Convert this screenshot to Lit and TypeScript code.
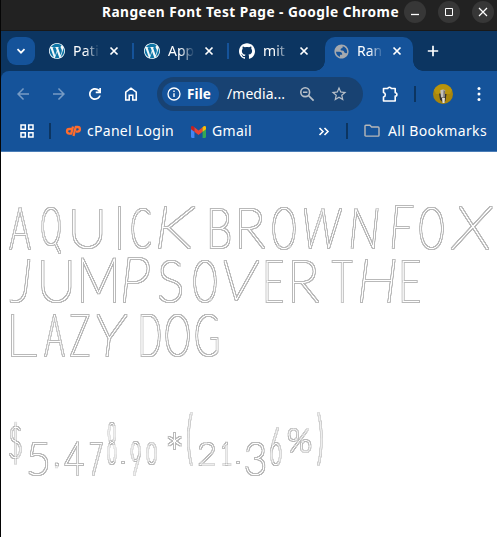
import { LitElement, html, css, svg, nothing } from "lit";
import { customElement, property } from "lit/decorators.js";
import { styleMap } from "lit/directives/style-map.js";

const ctx = document.createElement("canvas").getContext("2d")!;

/* Text whose tracking is adjusted so that it spans a given width. */
@customElement("fit-label")
class FitLabel extends LitElement {
  @property() text = "";
  @property({ type: Number }) span = 0;
  @property({ type: Number }) size = 14;
  @property({ type: Number }) weight = 400;
  static styles = css`
    :host { display: block; flex: none; }
    .label { display: block; white-space: pre; font-family: "Noto Sans", "Open Sans", sans-serif; line-height: 20px; }
  `;
  render() {
    ctx.font = `${this.weight} ${this.size}px "Noto Sans"`;
    const gap = (this.span - ctx.measureText(this.text).width) / this.text.length;
    return html`<span class="label" style=${styleMap({
      width: `${this.span}px`, fontSize: `${this.size}px`,
      fontWeight: `${this.weight}`, letterSpacing: `${gap.toFixed(3)}px`,
    })}>${this.text}</span>`;
  }
}

/* glyph, left, right, top, bottom (top and bottom relative to the line), optional italic */
type Glyph = [string, number, number, number, number, boolean?];
const LINES: { height: number; glyphs: Glyph[] }[] = [
  { height: 54, glyphs: [
    ["A", 9, 31, 7, 50], ["Q", 41, 62, 8, 55], ["U", 72, 103, 8, 49], ["I", 117, 122, 5, 50], ["C", 131, 152, 7, 49],
    ["K", 157, 197, 6, 49, true], [" ", 197, 207, 0, 0], ["B", 209, 231, 7, 49], ["R", 238, 266, 7, 49], ["O", 272, 296, 7, 50],
    ["W", 303, 343, 7, 49, true], ["N", 350, 379, 7, 49, true], [" ", 379, 389, 0, 0], ["F", 391, 414, 5, 49, true], ["O", 419, 444, 7, 50], ["X", 450, 493, 6, 50, true]] },
  { height: 54, glyphs: [
    ["J", 9, 31, 5, 49, true], ["U", 41, 72, 6, 49], ["M", 80, 116, 2, 49], ["P", 122, 151, 3, 49, true], ["S", 158, 183, 6, 49],
    [" ", 183, 192, 0, 0], ["O", 193, 217, 6, 49], ["V", 223, 260, 5, 47, true], ["E", 265, 284, 6, 49], ["R", 291, 320, 6, 49],
    [" ", 320, 330, 0, 0], ["T", 331, 353, 6, 49], ["H", 359, 396, 5, 49, true], ["E", 401, 421, 6, 49]] },
  { height: 108, glyphs: [
    ["L", 10, 38, 6, 49], ["A", 44, 65, 6, 49], ["Z", 70, 90, 6, 49], ["Y", 96, 128, 6, 49, true], [" ", 128, 139, 0, 0],
    ["D", 140, 161, 6, 49], ["O", 165, 190, 6, 49], ["G", 195, 219, 6, 49]] },
  { height: 60, glyphs: [
    ["$", 9, 22, 5, 49], ["5", 28, 49, 25, 60], [",", 54, 59, 46, 53], ["4", 64, 85, 25, 60], ["7", 89, 103, 25, 60],
    ["8", 107, 117, 6, 49], [".", 121, 125, 44, 48], ["9", 130, 141, 25, 60], ["0", 146, 157, 25, 49], ["*", 167, 182, 15, 34],
    ["(", 187, 193, -5, 52], ["2", 198, 216, 25, 50], ["1", 221, 232, 24, 50], [".", 236, 240, 44, 48], ["3", 245, 266, 25, 60],
    ["6", 270, 282, 10, 50], ["%", 287, 312, 11, 37], [")", 317, 323, -5, 52]] },
];
const INSET = 1.3;

/* Thin monoline letters; the filter swells each stroke and keeps only its rim. */
@customElement("outline-specimen")
class OutlineSpecimen extends LitElement {
  static styles = css`
    :host { display: block; padding-top: 48px; }
    .defs { display: block; width: 0; height: 0; }
    .sheet { filter: url(#rim); }
    .line { display: flex; align-items: flex-start; }
    .cell { display: block; flex: none; height: 10px; white-space: pre; }
    .glyph {
      display: block; width: 0; height: 0; transform-origin: 0 0;
      font: 100 50px/0 Lato, sans-serif; color: #000;
    }
    .slant { font-style: italic; }
  `;
  render() {
    return html`<svg class="defs"><filter id="rim" x="-5%" y="-10%" width="110%" height="120%" color-interpolation-filters="sRGB">
      <feComponentTransfer result="core"><feFuncA type="linear" slope="2.6" intercept="-.1"/></feComponentTransfer>
      <feMorphology in="core" operator="dilate" radius="1" result="wide"/>
      <feComposite in="wide" in2="core" operator="out"/>
      <feComponentTransfer>
        <feFuncR type="linear" slope="0" intercept=".4"/><feFuncG type="linear" slope="0" intercept=".4"/><feFuncB type="linear" slope="0" intercept=".4"/>
        <feFuncA type="linear" slope=".46"/>
      </feComponentTransfer></filter></svg>
    <div class="sheet">${LINES.map(({ height, glyphs }) => {
      let x = 0;
      return html`<div class="line" style=${styleMap({ height: `${height}px` })}>${glyphs.map(([ch, l, r, t, b, it]) => {
        const cell = { marginLeft: `${l - x}px`, width: `${r - l}px` };
        x = r;
        if (ch === " ") return html`<span class="cell" style=${styleMap(cell)}> </span>`;
        ctx.font = `${it ? "italic " : ""}100 50px Lato`;
        const m = ctx.measureText(ch);
        const w = m.actualBoundingBoxLeft + m.actualBoundingBoxRight;
        const h = m.actualBoundingBoxAscent + m.actualBoundingBoxDescent;
        const base = (m.fontBoundingBoxAscent - m.fontBoundingBoxDescent) / 2;
        const sx = (r - l - 2 * INSET) / w, sy = (b - t - 2 * INSET) / h;
        const tx = INSET - 1 + m.actualBoundingBoxLeft * sx;
        const ty = t + INSET + (m.actualBoundingBoxAscent - base) * sy;
        return html`<span class="cell" style=${styleMap(cell)}><span class="glyph ${it ? "slant" : ""}"
          style=${styleMap({ transform: `matrix(${sx},0,0,${sy},${tx},${ty})` })}>${ch}</span></span>`;
      })}</div>`;
    })}</div>`;
  }
}

const icon = (body: unknown, size = 18, box = "0 0 24 24") =>
  html`<svg class="icon" width=${size} height=${size} viewBox=${box}>${body}</svg>`;

const wordpress = icon(svg`<circle cx="12" cy="12" r="11.6" fill="#0d75a6"/><path fill="#f4f8fa" d="M21.469 6.825c.84 1.537 1.318 3.3 1.318 5.175 0 3.979-2.156 7.456-5.363 9.325l3.295-9.527c.615-1.54.82-2.771.82-3.864 0-.405-.026-.78-.07-1.11m-7.981.105c.647-.03 1.232-.105 1.232-.105.582-.075.514-.93-.067-.899 0 0-1.755.135-2.88.135-1.064 0-2.85-.15-2.85-.15-.585-.03-.661.855-.075.885 0 0 .54.061 1.125.09l1.68 4.605-2.37 7.08L5.354 6.9c.649-.03 1.234-.1 1.234-.1.585-.075.516-.93-.065-.896 0 0-1.746.138-2.874.138-.2 0-.438-.008-.69-.015C4.911 3.15 8.235 1.215 12 1.215c2.809 0 5.365 1.072 7.286 2.833-.046-.003-.091-.009-.141-.009-1.06 0-1.812.923-1.812 1.914 0 .89.513 1.643 1.06 2.531.411.72.89 1.643.89 2.977 0 .915-.354 1.994-.821 3.479l-1.075 3.585-3.9-11.61.001.014zM12 22.784c-1.059 0-2.081-.153-3.048-.437l3.237-9.406 3.315 9.087c.024.053.05.101.078.149-1.12.393-2.325.609-3.582.609M1.211 12c0-1.564.336-3.05.935-4.39L7.29 21.709C3.694 19.96 1.212 16.271 1.211 12M12 0C5.385 0 0 5.385 0 12s5.385 12 12 12 12-5.385 12-12S18.615 0 12 0"/>`, 16);
const github = icon(svg`<path fill="#fff" d="M12 .297c-6.63 0-12 5.373-12 12 0 5.303 3.438 9.8 8.205 11.385.6.113.82-.258.82-.577 0-.285-.01-1.04-.015-2.04-3.338.724-4.042-1.61-4.042-1.61C4.422 18.07 3.633 17.7 3.633 17.7c-1.087-.744.084-.729.084-.729 1.205.084 1.838 1.236 1.838 1.236 1.07 1.835 2.809 1.305 3.495.998.108-.776.417-1.305.76-1.605-2.665-.3-5.466-1.332-5.466-5.93 0-1.31.465-2.38 1.235-3.22-.135-.303-.54-1.523.105-3.176 0 0 1.005-.322 3.3 1.23.96-.267 1.98-.399 3-.405 1.02.006 2.04.138 3 .405 2.28-1.552 3.285-1.23 3.285-1.23.645 1.653.24 2.873.12 3.176.765.84 1.23 1.91 1.23 3.22 0 4.61-2.805 5.625-5.475 5.92.42.36.81 1.096.81 2.22 0 1.606-.015 2.896-.015 3.286 0 .315.21.69.825.57C20.565 22.092 24 17.592 24 12.297c0-6.627-5.373-12-12-12"/>`, 16);
const globe = icon(svg`<path fill="#a5a9ae" fill-rule="evenodd" d="M12 2C6.480 2 2 6.480 2 12s4.480 10 10 10 10-4.480 10-10S17.520 2 12 2zM4.200 12.500h4.300c3.200 0 4.700 1.500 4.500 4.200h-3.200v2.900C6.600 18.600 4.400 16 4.200 12.500zM19.700 14c-.8.4-2.300.5-3.200-.2-1-.7-.6-2.500-2.300-2.900-1.400-.3-3.300.2-3.500-1.600-.1-1.200.8-2 2-2 .9 0 1-1.500 1-2.800 3.700.9 6.200 4.100 6.200 7.500 0 .7 0 1.400-.2 2z"/>`, 17);
const close = icon(svg`<path d="M1.500 1.500l7 7m0-7l-7 7" stroke="#fff" stroke-width="1.700"/>`, 10, "0 0 10 10");

const TABS = [
  { icon: wordpress, name: "Pati", span: 26 },
  { icon: wordpress, name: "App", span: 26 },
  { icon: github, name: "mit", span: 22 },
  { icon: globe, name: "Ran", span: 25, active: true },
];

@customElement("app-root")
class AppRoot extends LitElement {
  static styles = css`
    :host { display: block; width: 497px; height: 537px; box-sizing: border-box; overflow: hidden; background: #fff; border-left: 1px solid #050505; color: #fff; }
    * { box-sizing: border-box; }
    .icon { display: block; flex: none; overflow: visible; }
    .title { height: 31px; background: #222; border-bottom: 1px solid #191919; display: flex; padding: 2px 2px 0 101px; align-items: flex-start; }
    .win { width: 22px; height: 22px; border-radius: 50%; background: #373737; display: grid; place-items: center; margin-left: 12px; flex: none; margin-top: -1px; }
    .win.first { margin-left: 5px; }
    .strip { height: 40px; background: #0c3561; display: flex; padding: 6px 0 0 6px; }
    .menu { width: 28px; height: 28px; border-radius: 9px; background: #15539a; display: grid; place-items: center; margin-right: 4px; flex: none; }
    .tab { width: 95px; height: 34px; display: flex; align-items: flex-start; padding: 0 0 0 10px; flex: none; }
    .tab .pic { width: 16px; margin: 6px 8px 0 0; height: 16px; display: grid; place-items: center; flex: none; }
    .tab .name { width: 27px; flex: none; overflow: hidden; margin: 4px 9px 0 0; -webkit-mask-image: linear-gradient(90deg, #000 45%, transparent 98%); mask-image: linear-gradient(90deg, #000 45%, transparent 98%); }
    .tab .x { margin: 9px 13px 0 0; flex: none; }
    .tab .bar { width: 2px; height: 16px; margin-top: 6px; background: #15539a; }
    .tab.plain { width: 96px; }
    .tab.active { width: 88px; padding-left: 8px; background: #15539a; border-radius: 10px 10px 0 0; position: relative; }
    .tab.active .name { margin-right: 8px; }
    .tab.active .x { margin-right: 0; }
    .tab.active::before, .tab.active::after { content: ""; position: absolute; bottom: 0; width: 10px; height: 10px; }
    .tab.active::before { left: -10px; background: radial-gradient(circle at 0 0, transparent 9.5px, #15539a 10px); }
    .tab.active::after { right: -10px; background: radial-gradient(circle at 100% 0, transparent 9.5px, #15539a 10px); }
    .plus { margin: 8px 0 0 14px; }
    .chrome { background: #15539a; border-radius: 8px 0 0 0; height: 81px; border-bottom: 1px solid #4a7db7; }
    .under { background: #0c3561; }
    .tools { height: 46px; display: flex; align-items: center; padding-left: 13px; }
    .nav { display: flex; gap: 18px; }
    .dim { opacity: .42; }
    .omni { width: 206px; height: 34px; border-radius: 17px; background: #184272; margin-left: 17px; display: flex; align-items: center; padding-left: 5px; flex: none; }
    .chip { width: 57px; height: 24px; border-radius: 12px; background: #15539a; display: flex; align-items: center; padding-left: 4px; gap: 5px; margin-right: 8px; flex: none; }
    .omni .zoom { margin-left: 14px; }
    .omni .star { margin-left: 15px; }
    .puzzle { margin-left: 18px; }
    .rule { width: 2px; height: 16px; background: #0c3561; flex: none; }
    .rule.a { margin: 0 17px 0 15px; }
    .avatar { margin-right: 17px; }
    .marks { height: 34px; display: flex; align-items: center; padding: 0 0 6px 18px; }
    .marks .rule.b { margin: 0 14px 0 14px; }
    .gm { margin: 0 6px 0 17px; }
    .more { margin: 0 17px 0 66px; }
    .folder { margin: 0 8px 0 16px; }
  `;
  render() {
    return html`
      <header class="title">
        <fit-label text="Rangeen Font Test Page - Google Chrome" .span=${297} .size=${13.7} .weight=${700}></fit-label>
        <span class="win first">${icon(svg`<path d="M3 9.500h8" stroke="#fff" stroke-width="1.300"/>`, 14, "0 0 14 14")}</span>
        <span class="win">${icon(svg`<path d="M3.500 3.500h7v7h-7z" fill="none" stroke="#fff"/>`, 14, "0 0 14 14")}</span>
        <span class="win">${icon(svg`<path d="M3 3l8 8m0-8l-8 8" stroke="#fff" stroke-width="1.200"/>`, 14, "0 0 14 14")}</span>
      </header>
      <nav class="strip">
        <span class="menu">${icon(svg`<path d="M1.500 3.200L5 6.700l3.500-3.500" fill="none" stroke="#fff" stroke-width="1.700"/>`, 10, "0 0 10 10")}</span>
        ${TABS.map((t, i) => html`<div class="tab ${t.active ? "active" : i === 2 ? "plain" : ""}">
          <span class="pic">${t.icon}</span>
          <span class="name"><fit-label text=${t.name} .span=${t.span}></fit-label></span>
          <span class="x">${close}</span>${i < 2 ? html`<i class="bar"></i>` : nothing}</div>`)}
        <span class="plus">${icon(svg`<path d="M6 .8v10.400M.8 6h10.400" stroke="#fff" stroke-width="1.700"/>`, 12, "0 0 12 12")}</span>
      </nav>
      <div class="under"><section class="chrome">
        <div class="tools">
          <div class="nav">
            <span class="dim">${icon(svg`<path fill="#fff" d="M20 11H7.830l5.590-5.590L12 4l-8 8 8 8 1.410-1.410L7.830 13H20v-2z"/>`)}</span>
            <span class="dim">${icon(svg`<path fill="#fff" d="M12 4l-1.410 1.410L16.170 11H4v2h12.170l-5.580 5.590L12 20l8-8z"/>`)}</span>
            ${icon(svg`<path fill="#fff" d="M12 20c-4.430 0-8-3.570-8-8s3.570-8 8-8c2.300 0 4.300.95 5.750 2.450V4H20v7h-7V8.800h3.900C15.700 7.100 14 6.200 12 6.200c-3.250 0-5.800 2.550-5.800 5.800s2.550 5.800 5.800 5.800c2.500 0 4.600-1.500 5.400-3.700h2.300C18.800 17.600 15.700 20 12 20z"/>`)}
            ${icon(svg`<path d="M5 20V9.500l7-5.300 7 5.300V20h-4.600v-6.400H9.600V20z" fill="none" stroke="#fff" stroke-width="2.100"/>`)}
          </div>
          <div class="omni">
            <span class="chip">${icon(svg`<circle cx="8" cy="8" r="6" fill="none" stroke="#fff" stroke-width="1.300"/><path d="M8 7.200V11M8 4.600v1.500" stroke="#fff" stroke-width="1.400"/>`, 16, "0 0 16 16")}<fit-label text="File" .span=${24} .size=${13.5} .weight=${700}></fit-label></span>
            <fit-label text="/media..." .span=${58} .size=${14}></fit-label>
            <span class="zoom">${icon(svg`<g fill="none" stroke="#b8c0c9" stroke-width="1.600"><circle cx="6.200" cy="6.200" r="4.400"/><path d="M9.600 9.600l5 5M4 6.200h4.400"/></g>`, 16, "0 0 16 16")}</span>
            <span class="star">${icon(svg`<path fill="#b8c0c9" d="M22 9.240l-7.190-.62L12 2 9.190 8.630 2 9.240l5.460 4.730L5.820 21 12 17.270 18.180 21l-1.630-7.030L22 9.240zM12 15.400l-3.760 2.270 1-4.280-3.320-2.880 4.380-.38L12 6.100l1.710 4.040 4.380.38-3.320 2.880 1 4.280L12 15.400z"/>`)}</span>
          </div>
          <span class="puzzle">${icon(svg`<path d="M2.500 3.500h4.200a1.900 1.900 0 0 1 3.600 0h3.900v4.200a1.700 1.700 0 0 1 0 3.400v4.900H2.500v-4a2.300 2.300 0 0 0 0-4.500z" fill="none" stroke="#fff" stroke-width="1.600" stroke-linejoin="round"/>`, 18, "0 0 18 18")}</span>
          <i class="rule a"></i>
          <span class="avatar">${icon(svg`<circle cx="10" cy="10" r="10" fill="#a8850c"/><path d="M1 6A10 10 0 0 1 19 6L17 10H3z" fill="#b8940d"/><path d="M6 9.500l1 6 3 3.500 2.500-2 1-7z" fill="#34302c"/><path d="M7.300 6.300q3-1.800 5 .2l-.8 7H8z" fill="#c4c0bc"/><path d="M10.500 6l1.800 1-1 6.500h-1z" fill="#77716d"/><path d="M9 14l3 0-.5 5H9.500z" fill="#e5dfd5"/>`, 20, "0 0 20 20")}</span>
          ${icon(svg`<g fill="#fff"><circle cx="9" cy="3.500" r="1.500"/><circle cx="9" cy="9" r="1.500"/><circle cx="9" cy="14.500" r="1.500"/></g>`, 18, "0 0 18 18")}
        </div>
        <div class="marks">
          ${icon(svg`<path d="M2 2h4.300v4.300H2zM9.700 2H14v4.300H9.700zM2 9.700h4.300V14H2zM9.700 9.700H14V14H9.700z" fill="none" stroke="#fff" stroke-width="1.500"/>`, 16, "0 0 16 16")}
          <i class="rule b"></i>
          ${icon(svg`<g fill="none" stroke="#ff6c2c" stroke-width="2.300" stroke-linejoin="round"><path d="M7 6H4.300a2.300 2.300 0 0 0 0 4.600H6.300L8 3.500M8.500 13L10.700 4H12.600a2.300 2.300 0 0 1 0 4.600H11"/></g>`, 16, "0 0 16 16")}
          <fit-label style="margin-left:6px" text="cPanel Login" .span=${87}></fit-label>
          <span class="gm">${icon(svg`<path d="M0 3h3.200v10H1a1 1 0 0 1-1-1z" fill="#4285f4"/><path d="M10.800 3H14v9a1 1 0 0 1-1 1h-2.200z" fill="#34a853"/><path d="M3.200 3L7 6l3.800-3v4.200L7 10.200 3.200 7.200z" fill="#ea4335"/><path d="M0 3.200C0 1.500 1.700 1.300 3.200 3v4.200L0 4.800z" fill="#c5221f"/><path d="M14 3.200c0-1.700-1.700-1.900-3.200-.2v4.200L14 4.800z" fill="#fbbc04"/>`, 15, "0 0 14 14")}</span>
          <fit-label text="Gmail" .span=${40}></fit-label>
          <span class="more">${icon(svg`<path d="M1.500 1.500L5 5 1.500 8.500M6.500 1.500L10 5 6.500 8.500" fill="none" stroke="#fff" stroke-width="1.600"/>`, 11, "0 0 11 10")}</span>
          <i class="rule"></i>
          <span class="folder">${icon(svg`<path d="M1 3.200q0-.9.900-.9h4l1.700 1.700h6.500q.9 0 .9.900v7.300q0 .9-.9.900H1.900q-.9 0-.9-.9z" fill="none" stroke="#b8b8b8" stroke-width="1.400"/>`, 16, "0 0 16 16")}</span>
          <fit-label text="All Bookmarks" .span=${99}></fit-label>
        </div>
      </section></div>
      <outline-specimen></outline-specimen>`;
  }
}
